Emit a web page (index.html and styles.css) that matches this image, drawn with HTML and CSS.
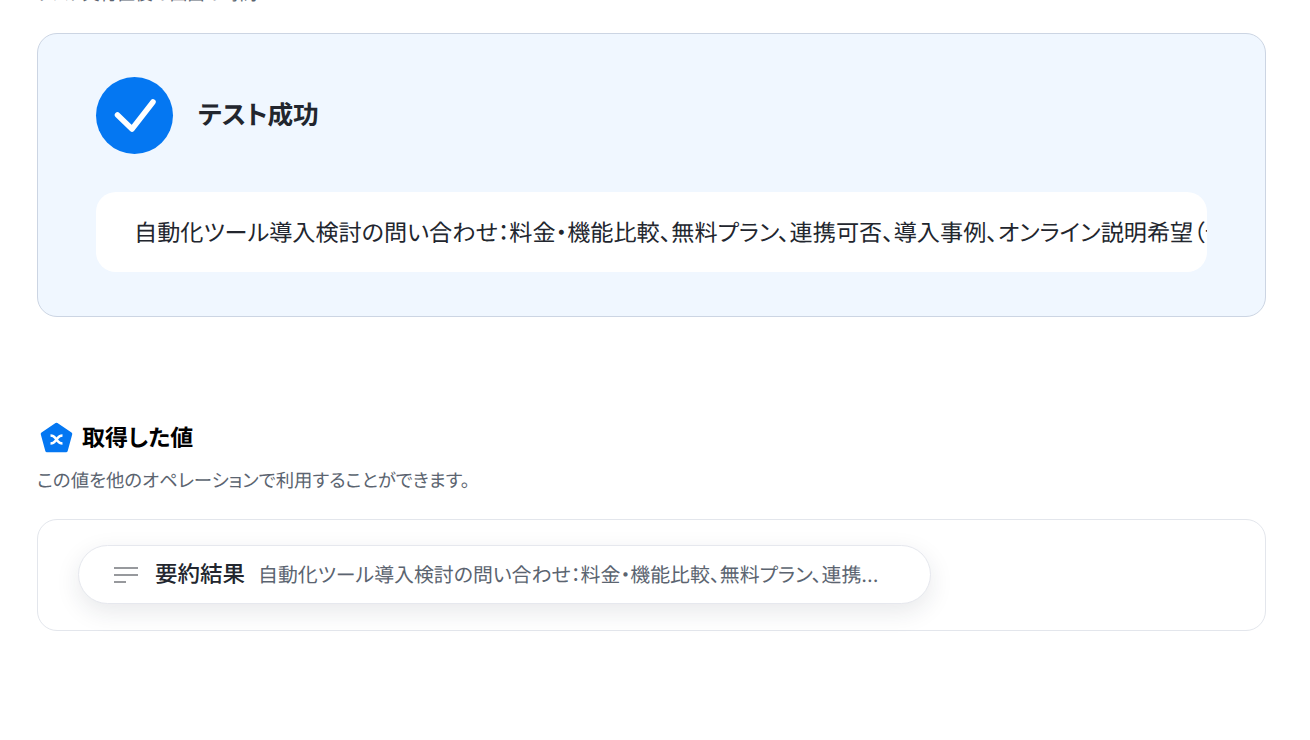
FILE: index.html
```html
<!DOCTYPE html>
<html lang="ja">
<head>
    <meta charset="UTF-8">
    <meta name="viewport" content="width=device-width, initial-scale=1.0">
    <title>テスト成功</title>
    <link rel="stylesheet" href="styles.css">
</head>
<body>
    <p class="cut-note">テスト実行直後の画面の時間</p>

    <section class="result-box">
        <div class="result-head">
            <div class="check-badge">
                <svg width="44" height="44" viewBox="0 0 44 44" fill="none" stroke="white" stroke-width="5.500" stroke-linecap="round" stroke-linejoin="round">
                    <path d="M4.500 21l14.500 14L40 8"/>
                </svg>
            </div>
            <h2>テスト成功</h2>
        </div>
        <div class="result-text">
            <span>自動化ツール導入検討の問い合わせ&#xFF1A;料金・機能比較、無料プラン、連携可否、導入事例、オンライン説明希望&#xFF08;デモ含む&#xFF09;についてのご相談です。</span>
        </div>
    </section>

    <section class="values">
        <div class="values-head">
            <svg width="34" height="34" viewBox="0 0 34 34">
                <path d="M16.500 3.500L30.500 13L26 29.500H7L2.500 13Z" fill="#0477f2" stroke="#0477f2" stroke-width="3.500" stroke-linejoin="round"/>
                <path d="M10.500 14.500c4 0 4 1.800 6 4s2 4 6 4M22.500 14.500c-4 0-4 1.800-6 4s-2 4-6 4" fill="none" stroke="white" stroke-width="2.500"/>
            </svg>
            <h3>取得した値</h3>
        </div>
        <p class="values-desc">この値を他のオペレーションで利用することができます。</p>
        <div class="values-box">
            <div class="value-pill">
                <svg width="26" height="18" viewBox="0 0 26 18" fill="none" stroke="#30353d" stroke-width="1.200">
                    <path d="M1 2h24M1 9h24M1 16h12"/>
                </svg>
                <span class="value-name">要約結果</span>
                <span class="value-text">自動化ツール導入検討の問い合わせ&#xFF1A;料金・機能比較、無料プラン、連携...</span>
            </div>
        </div>
    </section>
</body>
</html>
```

FILE: styles.css
```css
html, body {
    height: 100%;
    overflow: hidden;
}

body {
    font-family: Inter, "Noto Sans CJK JP", sans-serif;
    font-feature-settings: "palt";
    text-rendering: geometricPrecision;
    background-color: #fff;
    margin: 0;
    padding: 0 44px 0 37px;
    color: #22262e;
}

.cut-note {
    margin: -17px 0 0;
    height: 50px;
    font-size: 17.600px;
    line-height: 24px;
    color: #5b6470;
}

.result-box {
    height: 284px;
    box-sizing: border-box;
    padding: 43px 58px 44px;
    background-color: #f0f7ff;
    border: 1px solid #ccd5e3;
    border-radius: 20px;
}

.result-head {
    display: flex;
    align-items: center;
    gap: 25px;
}

.check-badge {
    width: 77px;
    height: 77px;
    display: flex;
    align-items: center;
    justify-content: center;
    border-radius: 50%;
    background-color: #0477f2;
}

.result-head h2 {
    margin: 0 0 4px;
    font-size: 25.700px;
    font-weight: 700;
}

.result-text {
    margin-top: 38px;
    height: 80px;
    padding: 0 0 2px 38px;
    box-sizing: border-box;
    display: flex;
    align-items: center;
    overflow: hidden;
    white-space: nowrap;
    font-size: 23.150px;
    background-color: #fff;
    border-radius: 20px;
}

.values {
    margin-top: 104px;
}

.values-head {
    display: flex;
    align-items: center;
    gap: 8px;
    height: 34px;
    padding-left: 3px;
    color: #000;
}

.values-head h3 {
    margin: 0 0 4px;
    font-size: 23px;
    font-weight: 700;
}

.values-desc {
    margin: 14px 0 0;
    font-size: 18.400px;
    line-height: 24px;
    color: #5b6470;
}

.values-box {
    margin-top: 26px;
    height: 112px;
    box-sizing: border-box;
    padding: 25px 40px;
    border: 1px solid #e3e6ec;
    border-radius: 20px;
}

.value-pill {
    width: 853px;
    height: 59px;
    box-sizing: border-box;
    padding: 0 34px;
    display: flex;
    align-items: center;
    background-color: #fff;
    border: 1px solid #e6e8ee;
    border-radius: 30px;
    box-shadow: 0 8px 24px rgba(30, 40, 60, 0.1);
    white-space: nowrap;
}

.value-name {
    margin: 0 0 3px 16px;
    font-size: 22.500px;
    font-weight: 500;
}

.value-text {
    margin: 0 0 3px 13px;
    font-size: 19.900px;
    color: #5b6470;
}
```
